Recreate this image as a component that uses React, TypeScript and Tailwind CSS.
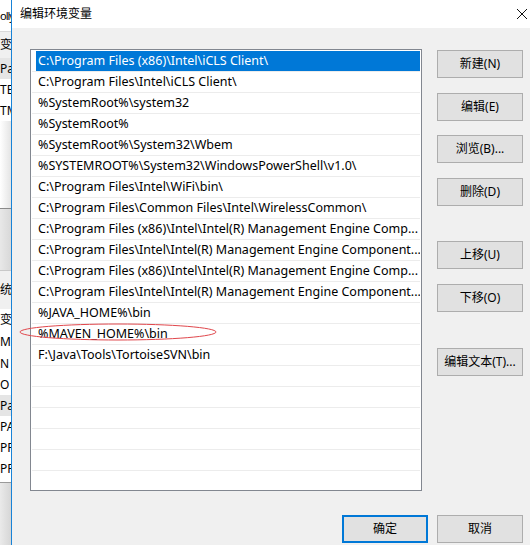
import React from 'react'

const paths = [
  'C:\\Program Files (x86)\\Intel\\iCLS Client\\',
  'C:\\Program Files\\Intel\\iCLS Client\\',
  '%SystemRoot%\\system32',
  '%SystemRoot%',
  '%SystemRoot%\\System32\\Wbem',
  '%SYSTEMROOT%\\System32\\WindowsPowerShell\\v1.0\\',
  'C:\\Program Files\\Intel\\WiFi\\bin\\',
  'C:\\Program Files\\Common Files\\Intel\\WirelessCommon\\',
  'C:\\Program Files (x86)\\Intel\\Intel(R) Management Engine Comp...',
  'C:\\Program Files\\Intel\\Intel(R) Management Engine Component...',
  'C:\\Program Files (x86)\\Intel\\Intel(R) Management Engine Comp...',
  'C:\\Program Files\\Intel\\Intel(R) Management Engine Component...',
  '%JAVA_HOME%\\bin',
  '%MAVEN_HOME%\\bin',
  'F:\\Java\\Tools\\TortoiseSVN\\bin',
]

const font = { fontFamily: '"Noto Sans", "Noto Sans CJK SC", sans-serif' }

function Btn({ label, className = '', primary = false }: { label: string; className?: string; primary?: boolean }) {
  return (
    <div className={'w-[86px] h-[28px] bg-[#e1e1e1] flex items-center justify-center text-[12px] text-black ' + (primary ? 'border-2 border-[#0078d7] ' : 'border border-[#adadad] ') + className}>
      {label}
    </div>
  )
}

function Strip(){
  return (
    <div className="w-[11px] h-full flex flex-col overflow-hidden text-[12px] text-black leading-none whitespace-nowrap bg-[#f0f0f0]">
      <div className="h-[31px] bg-white flex items-center text-[11px] tracking-[-1px]">olly</div>
      <div className="h-px bg-[#dadada]"/>
      <div className="h-[26px] flex items-center">变</div>
      <div className="h-[21px] flex items-center bg-[#e5e5e5]">Pa</div>
      <div className="h-[21px] flex items-center bg-white">TE</div>
      <div className="h-[21px] flex items-center bg-white">TM</div>
      <div className="h-[87px] bg-gradient-to-r from-white to-[#e4e4e4]"/>
      <div className="h-px bg-[#8a8a8a]"/>
      <div className="h-[61px] bg-gradient-to-r from-[#e8e8e8] to-[#d8d8d8]"/>
      <div className="h-px bg-[#c8c8c8]"/>
      <div className="h-[38px] flex items-center">统</div>
      <div className="h-[22px] flex items-center bg-white">变</div>
      <div className="h-[22px] flex items-center bg-white">M</div>
      <div className="h-[21px] flex items-center bg-white">N</div>
      <div className="h-[21px] flex items-center bg-white">O</div>
      <div className="h-[21px] flex items-center bg-[#e5e5e5]">Pa</div>
      <div className="h-[21px] flex items-center bg-white">PA</div>
      <div className="h-[21px] flex items-center bg-white">PF</div>
      <div className="h-[21px] flex items-center bg-white">PF</div>
      <div className="h-[3px] bg-white"/>
      <div className="h-px bg-[#9a9a9a]"/>
      <div className="flex-1 bg-gradient-to-r from-[#eaeaea] to-[#d6d6d6]"/>
    </div>
  )
}

export default function App(){
  const rows = [...paths, ...Array(8).fill('')]
  return (
    <div className="w-[530px] h-[545px] flex overflow-hidden bg-[#f0f0f0]" style={font}>
      <Strip/>
      <div className="w-px h-full bg-[#1883d7]"/>
      <div className="flex-1 flex flex-col">
        <div className="h-[28px] bg-white flex items-center justify-between pl-[8px] pr-[2px]">
          <span className="text-[12px] text-black">编辑环境变量</span>
          <svg width="12" height="12" viewBox="0 0 12 12">
            <path d="M1 1 L11 11 M11 1 L1 11" stroke="#111" strokeWidth="1" fill="none"/>
          </svg>
        </div>
        <div className="flex pl-[18px] pt-[21px] relative">
          <div className="w-[392px] h-[442px] border border-[#828790] bg-white p-px overflow-hidden">
            {rows.map((r, i) => (
              <div key={i} className="h-[21px] flex flex-col">
                {i === 0 ? (
                  <div className="h-[20px] ml-[4px] pl-[2px] bg-[#0078d7] text-white text-[12.5px] flex items-center whitespace-nowrap overflow-hidden">{r}</div>
                ) : (
                  <div className="h-[20px] pl-[6px] text-black text-[12.5px] flex items-center whitespace-nowrap overflow-hidden">{r}</div>
                )}
                <div className="h-px bg-[#ececec]"/>
              </div>
            ))}
          </div>
          <div className="ml-[15px] pt-px flex flex-col">
            <Btn label="新建(N)"/>
            <Btn label="编辑(E)" className="mt-[15px]"/>
            <Btn label="浏览(B)..." className="mt-[14px]"/>
            <Btn label="删除(D)" className="mt-[15px]"/>
            <Btn label="上移(U)" className="mt-[35px]"/>
            <Btn label="下移(O)" className="mt-[15px]"/>
            <Btn label="编辑文本(T)..." className="mt-[36px]"/>
          </div>
          <svg className="absolute left-[6px] top-[295px]" width="200" height="18" viewBox="0 0 200 18">
            <ellipse cx="100" cy="9" rx="98" ry="8" stroke="#e0474c" strokeWidth="1" fill="none"/>
          </svg>
        </div>
        <div className="flex justify-end gap-[9px] pr-[7px] mt-[24px]">
          <Btn label="确定" primary/>
          <Btn label="取消"/>
        </div>
      </div>
    </div>
  )
}
